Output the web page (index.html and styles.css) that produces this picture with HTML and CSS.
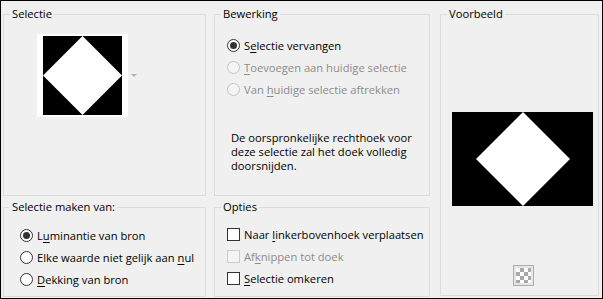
FILE: index.html
```html
<!DOCTYPE html>
<html>
<head>
<meta charset="utf-8">
<link rel="stylesheet" href="styles.css">
</head>
<body>
<div class="window">
  <fieldset class="grp sel">
    <legend>Selectie</legend>
    <div class="thumb-row">
      <div class="thumb">
        <svg width="79" height="79" viewBox="0 0 79 79"><rect width="79" height="79" fill="#000"/><polygon points="39.5,0 79,39.5 39.5,79 0,39.5" fill="#fff"/></svg>
      </div>
      <span class="caret"></span>
    </div>
  </fieldset>

  <fieldset class="grp bew">
    <legend>Bewerking</legend>
    <div class="opts">
      <div class="row"><span class="radio on"></span><span>S<u>e</u>lectie vervangen</span></div>
      <div class="row off"><span class="radio"></span><span><u>T</u>oevoegen aan huidige selectie</span></div>
      <div class="row off"><span class="radio"></span><span>Van <u>h</u>uidige selectie aftrekken</span></div>
    </div>
    <p class="desc">De oorspronkelijke rechthoek voor deze selectie zal het doek volledig doorsnijden.</p>
  </fieldset>

  <fieldset class="grp voor">
    <legend>Voorbeeld</legend>
    <div class="preview">
      <svg width="141" height="94" viewBox="0 0 141 94"><rect width="141" height="94" fill="#000"/><polygon points="71,0 118,47 71,94 24,47" fill="#fff"/></svg>
    </div>
    <div class="checker"><span class="cells"></span></div>
  </fieldset>

  <fieldset class="grp maken">
    <legend>Selectie maken van:</legend>
    <div class="opts">
      <div class="row"><span class="radio on"></span><span>L<u>u</u>minantie van bron</span></div>
      <div class="row"><span class="radio"></span><span>Elke waarde niet gelijk aan <u>n</u>ul</span></div>
      <div class="row"><span class="radio"></span><span><u>D</u>ekking van bron</span></div>
    </div>
  </fieldset>

  <fieldset class="grp opties">
    <legend>Opties</legend>
    <div class="opts">
      <div class="row"><span class="check"></span><span>Naar <u>l</u>inkerbovenhoek verplaatsen</span></div>
      <div class="row off"><span class="check"></span><span>Af<u>k</u>nippen tot doek</span></div>
      <div class="row"><span class="check"></span><span><u>S</u>electie omkeren</span></div>
    </div>
  </fieldset>
</div>
</body>
</html>
```

FILE: styles.css
```css
html, body {
  margin: 0;
  padding: 0;
  background: #f0f0f0;
}
body {
  font-family: "Open Sans", "Noto Sans", sans-serif;
  font-size: 11.2px;
  color: #000;
}
.window {
  box-sizing: border-box;
  width: 603px;
  height: 299px;
  border: 1px solid #000;
  background: #f0f0f0;
  padding: 5px 1px 1px 2px;
  display: grid;
  grid-template-columns: 203px 216px 161px;
  grid-template-rows: 190px 98px;
  column-gap: 8px;
  row-gap: 3px;
}
.grp {
  margin: 0;
  padding: 0;
  min-width: 0;
  border: 1px solid #dcdcdc;
  box-sizing: border-box;
}
.grp legend {
  margin-left: 6px;
  padding: 0 2px;
  line-height: 16px;
  height: 16px;
}
.sel { grid-column: 1; grid-row: 1; }
.bew { grid-column: 2; grid-row: 1; }
.voor { grid-column: 3; grid-row: 1 / 3; margin-left: 2px; margin-bottom: 1px; }
.maken { grid-column: 1; grid-row: 2; }
.opties { grid-column: 2; grid-row: 2; }

.thumb-row {
  display: flex;
  align-items: center;
  margin: 12px 0 0 33px;
}
.thumb {
  background: #fff;
  padding: 2px 6px;
  display: flex;
}
.thumb svg { display: block; }
.caret {
  margin-left: 3px;
  width: 0;
  height: 0;
  border-left: 3px solid transparent;
  border-right: 3px solid transparent;
  border-top: 3px solid #b4b4b4;
}

.opts {
  display: flex;
  flex-direction: column;
}
.bew .opts { margin: 12px 0 0 12px; }
.maken .opts { margin: 9px 0 0 16px; }
.opties .opts { margin: 8px 0 0 12px; }
.row {
  height: 22px;
  display: flex;
  align-items: center;
  gap: 4px;
  white-space: nowrap;
}
.row.off { color: #8c8c8c; }
.radio {
  box-sizing: border-box;
  width: 13px;
  height: 13px;
  border-radius: 50%;
  border: 1px solid #333;
  background: #fff;
  display: flex;
  align-items: center;
  justify-content: center;
  flex: none;
}
.radio.on::after {
  content: "";
  width: 7px;
  height: 7px;
  border-radius: 50%;
  background: #333;
}
.off .radio {
  border-color: #c4c4c4;
  background: #f4f4f4;
}
.check {
  box-sizing: border-box;
  width: 13px;
  height: 13px;
  border: 1px solid #333;
  background: #fff;
  flex: none;
}
.off .check {
  border-color: #cccccc;
  background: #f4f4f4;
}
u { text-decoration-thickness: 1px; text-underline-offset: 2px; }

.desc {
  margin: 31px 0 0 16px;
  line-height: 14px;
  width: 190px;
}

.preview {
  margin: 90px 0 0 11px;
  display: flex;
}
.preview svg { display: block; }
.checker {
  box-sizing: border-box;
  width: 21px;
  height: 21px;
  border: 1px solid #adadad;
  background: #e6e6e6;
  margin: 59px 0 0 72px;
  display: flex;
  align-items: center;
  justify-content: center;
}
.cells {
  width: 15px;
  height: 15px;
  background: repeating-conic-gradient(#a9a9a9 0 25%, #ffffff 0 50%) 0 0 / 8px 8px;
}
```
